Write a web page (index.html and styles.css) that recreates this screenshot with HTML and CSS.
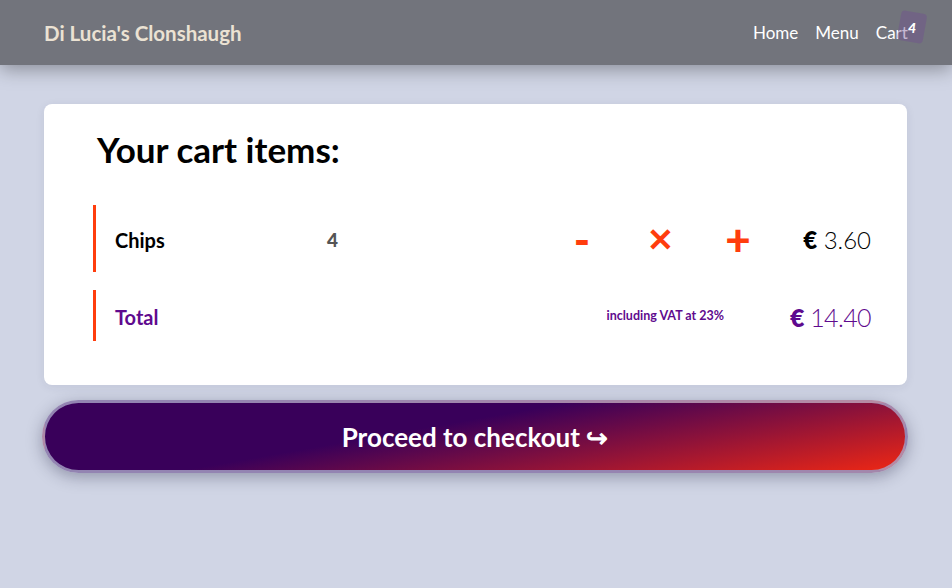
FILE: index.html
```html
<!DOCTYPE html>
<html lang="en">
<head>
<meta charset="utf-8">
<title>Di Lucia's Clonshaugh - Cart</title>
<link rel="stylesheet" href="styles.css">
</head>
<body>
<header class="topbar">
  <a class="brand" href="#">Di Lucia's Clonshaugh</a>
  <nav class="nav">
    <a href="#">Home</a>
    <a href="#">Menu</a>
    <a href="#" class="cart-link">Cart<span class="badge-bg"></span><sup class="badge">4</sup></a>
  </nav>
</header>
<main class="content">
  <section class="card">
    <h1 class="title">Your cart items:</h1>
    <div class="row item">
      <span class="name">Chips</span>
      <span class="qty">4</span>
      <span class="ctrl minus">-</span>
      <span class="ctrl remove">✕</span>
      <span class="ctrl plus">+</span>
      <span class="price"><b>€</b> 3.60</span>
    </div>
    <div class="row total">
      <span class="name">Total</span>
      <span class="vat">including VAT at 23%</span>
      <span class="price"><b>€</b> 14.40</span>
    </div>
  </section>
  <button class="checkout">Proceed to checkout ↪</button>
</main>
</body>
</html>
```
FILE: styles.css
```css
* { box-sizing: border-box; }
html, body { margin: 0; padding: 0; }
body {
  background: #d0d5e5;
  font-family: "Source Sans Pro", Lato, "Noto Sans", sans-serif;
  color: #000;
  height: 588px;
  overflow: hidden;
}
a { text-decoration: none; color: inherit; }
.topbar {
  height: 65px;
  background: #72747c;
  display: flex;
  align-items: center;
  justify-content: space-between;
  padding: 0 36px 0 44px;
  box-shadow: 0 4px 18px rgba(0,0,0,0.35);
  position: relative;
  z-index: 2;
}
.brand {
  color: #ebe2d3;
  font-weight: 700;
  font-size: 20.5px;
}
.nav { display: flex; gap: 17px; font-size: 17px; color: #fff; }
.cart-link { position: relative; }
.badge-bg {
  position: absolute;
  left: 23px;
  top: -10px;
  width: 26px;
  height: 30px;
  border-radius: 4px;
  background: rgba(112, 78, 145, 0.4);
  transform: rotate(10deg);
}
.badge {
  position: relative;
  font-weight: 900;
  font-style: italic;
  font-size: 14px;
  vertical-align: 6px;
  line-height: 0;
}
.content { padding: 39px 45px 0 44px; }
.card {
  background: #fff;
  border-radius: 8px;
  padding: 23px 36px 44px 49px;
  box-shadow: 0 2px 10px rgba(40,40,80,0.08);
}
.title {
  margin: 0 0 34px 4px;
  font-size: 35px;
  font-weight: 700;
  line-height: 44px;
}
.row {
  display: flex;
  align-items: center;
  border-left: 3px solid #ff3d0d;
  padding-left: 19px;
}
.row.item { height: 67px; margin-bottom: 18px; }
.row.total { height: 51px; }
.name { width: 212px; font-weight: 700; font-size: 20px; padding-top: 2px; }
.total .name { color: #5f0a8e; }
.qty { flex: 1; font-weight: 900; font-size: 19px; color: #555; padding-top: 2px; }
.ctrl {
  text-align: center;
  color: #ff3d0d;
  font-weight: 900;
  font-size: 44px;
  line-height: 1;
}
.minus { width: 76px; }
.remove { width: 80px; font-size: 32px; }
.plus { width: 76px; }
.price { width: 95px; text-align: right; font-size: 24px; font-weight: 300; padding-top: 2px; }
.price b { font-weight: 800; }
.total .price { color: #5f0a8e; font-size: 25px; letter-spacing: -0.6px; }
.vat {
  flex: 1;
  text-align: right;
  padding-right: 52px;
  color: #5f0a8e;
  font-weight: 700;
  font-size: 12.5px;
}
.checkout {
  display: block;
  width: 866px;
  height: 73px;
  margin: 15px 0 0 -2px;
  border-radius: 37px;
  border: 3px solid rgba(170, 165, 200, 0.8);
  background: linear-gradient(170deg, #39005a 42%, #ee2714 100%);
  color: #fff;
  font-family: inherit;
  font-weight: 700;
  font-size: 26px;
  box-shadow: 0 4px 16px rgba(30,30,60,0.35);
  cursor: pointer;
}
```
